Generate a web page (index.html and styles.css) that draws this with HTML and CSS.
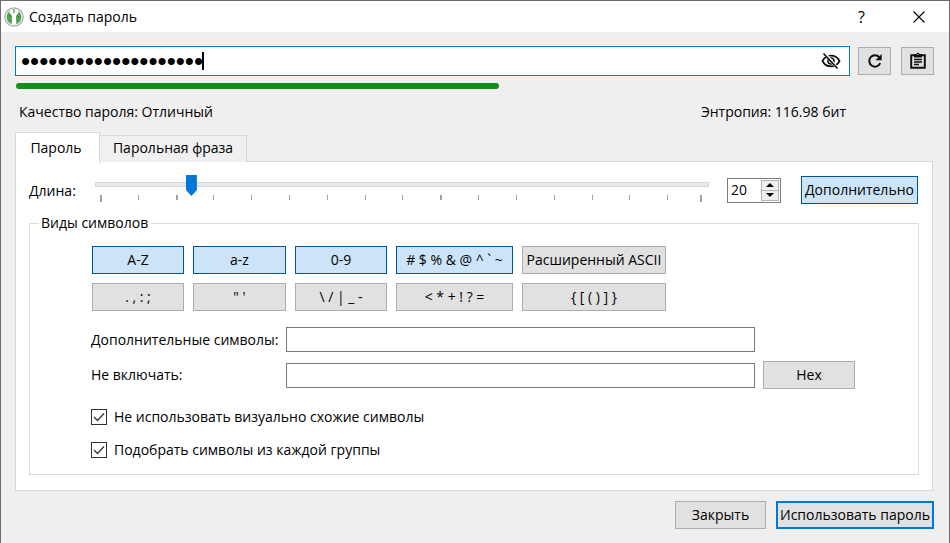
FILE: index.html
```html
<!DOCTYPE html>
<html lang="ru">
<head>
<meta charset="utf-8">
<title>Создать пароль</title>
<link rel="stylesheet" href="styles.css">
</head>
<body>
<div class="window">
  <header class="titlebar">
    <svg class="logo" viewBox="0 0 20 20" aria-hidden="true">
      <circle cx="10" cy="10" r="9.2" fill="#f4f4f4" stroke="#a9a9a9" stroke-width="1.2"/>
      <circle cx="10" cy="10" r="7.4" fill="#4aa556"/>
      <path d="M6 2.600h8l.6 3.200-2.600 3.200.3 8.400-2.300.4-2.300-.4.3-8.400-2.600-3.200z" fill="#fff"/>
      <path d="M9 2h2v4H9z" fill="#9db09e"/>
      <path d="M5 8h1v1H5zM14 9h1v1h-1zM6 13h1v1H6zM13 13h1v1h-1z" fill="#8a4a2a"/>
    </svg>
    <h1 class="title">Создать пароль</h1>
    <button class="caption help" type="button" aria-label="Справка">?</button>
    <button class="caption" type="button" aria-label="Закрыть окно">
      <svg width="12" height="12" viewBox="0 0 12 12"><path d="M.5.5l11 11M11.500.5l-11 11" stroke="#000" stroke-width="1.100" fill="none"/></svg>
    </button>
  </header>

  <main class="content">
    <div class="password-row">
      <div class="password-box">
        <input class="password" type="password" value="abcdefghijklmnopqrst" aria-label="Пароль">
        <span class="caret"></span>
        <button class="eye" type="button" aria-label="Показать пароль">
          <svg width="20" height="18" viewBox="0 0 20 18" fill="none" stroke="#111">
            <path d="M1.500 9C3.300 5.400 6.400 3.600 10 3.600S16.700 5.400 18.500 9c-1.800 3.600-4.900 5.400-8.500 5.400S3.300 12.600 1.500 9z" stroke-width="1.700"/>
            <circle cx="10" cy="9" r="3" stroke-width="1.600"/>
            <path d="M3.500 1l13 15.500" stroke="#fff" stroke-width="3"/>
            <path d="M2.500 1.500l14 15" stroke-width="1.700"/>
          </svg>
        </button>
      </div>
      <button class="btn tool" type="button" aria-label="Создать заново">
        <svg width="16" height="16" viewBox="0 0 16 16"><path d="M13.200 10.200A5.700 5.700 0 1 1 12.300 4.200" fill="none" stroke="#111" stroke-width="2"/><path d="M14.700 1v6.200H8.500z" fill="#111"/></svg>
      </button>
      <button class="btn tool" type="button" aria-label="Копировать пароль">
        <svg width="16" height="18" viewBox="0 0 16 18"><path d="M1.200 3.200h13.600v12.600H1.200z" fill="none" stroke="#111" stroke-width="2"/><path d="M4 2h2.400a1.700 1.700 0 0 1 3.200 0H12v3.500H4z" fill="#111"/><path d="M7.500 2h1v1h-1z" fill="#ddd"/><path d="M4 7.500h8M4 10h8M4 12.500h5" stroke="#111" stroke-width="1.300"/></svg>
      </button>
    </div>

    <div class="meter"><div class="meter-fill" style="width:52.600%"></div></div>

    <div class="quality">
      <span>Качество пароля: Отличный</span>
      <span>Энтропия: 116.98 бит</span>
    </div>

    <div class="tabs" role="tablist">
      <button class="tab active" type="button" role="tab" aria-selected="true">Пароль</button>
      <button class="tab" type="button" role="tab" aria-selected="false">Парольная фраза</button>
    </div>

    <section class="panel">
      <div class="length-row">
        <label class="length-label" for="length">Длина:</label>
        <div class="slider-box">
          <input class="slider" id="length" type="range" min="1" max="128" value="20">
          <div class="ticks">
            <i class="major"></i><i></i><i class="wide"></i><i></i><i></i><i></i><i></i><i></i><i></i><i class="wide"></i><i></i><i></i><i></i><i></i><i></i><i></i><i class="major"></i>
          </div>
        </div>
        <div class="spin">
          <input class="spin-value" type="text" value="20" aria-label="Длина пароля">
          <div class="spin-buttons">
            <button type="button" aria-label="Больше"><svg width="8" height="4" viewBox="0 0 8 4"><path d="M0 4l4-4 4 4z"/></svg></button>
            <button type="button" aria-label="Меньше"><svg width="8" height="4" viewBox="0 0 8 4"><path d="M0 0l4 4 4-4z"/></svg></button>
          </div>
        </div>
        <button class="btn on advanced" type="button">Дополнительно</button>
      </div>

      <fieldset class="group">
        <legend>Виды символов</legend>
        <div class="types">
          <button class="btn on" type="button">A-Z</button>
          <button class="btn on" type="button">a-z</button>
          <button class="btn on" type="button">0-9</button>
          <button class="btn on" type="button"># $ % &amp; @ ^ ` ~</button>
          <button class="btn" type="button">Расширенный ASCII</button>
          <button class="btn" type="button">. , : ;</button>
          <button class="btn" type="button">" '</button>
          <button class="btn" type="button">\ / | _ -</button>
          <button class="btn" type="button">&lt; * + ! ? =</button>
          <button class="btn" type="button">{ [ ( ) ] }</button>
        </div>
        <div class="fields">
          <label for="extra">Дополнительные символы:</label>
          <input class="field" id="extra" type="text">
          <span></span>
          <label for="exclude">Не включать:</label>
          <input class="field" id="exclude" type="text">
          <button class="btn" type="button">Hex</button>
        </div>
        <div class="checks">
          <label><input type="checkbox" checked>Не использовать визуально схожие символы</label>
          <label><input type="checkbox" checked>Подобрать символы из каждой группы</label>
        </div>
      </fieldset>
    </section>

    <footer class="actions">
      <button class="btn close" type="button">Закрыть</button>
      <button class="btn default" type="button">Использовать пароль</button>
    </footer>
  </main>
</div>
</body>
</html>
```
FILE: styles.css
```css
* { box-sizing: border-box; }

body {
  margin: 0;
  background: #efefef;
  color: #000;
  font: 14px/20px "Open Sans", "Noto Sans", sans-serif;
}

button, input { font: inherit; color: inherit; margin: 0; padding: 0; border-radius: 0; }

.window {
  min-height: 100vh;
  border: 1px solid #6c6c6c;
  border-bottom: 0;
}

.titlebar {
  display: flex;
  align-items: center;
  height: 31px;
  padding-left: 3px;
  background: #fff;
}
.logo { width: 20px; height: 20px; }
.title { flex: 1; margin: 0 0 0 5px; font-size: 14px; font-weight: 400; }
.caption {
  display: flex;
  align-items: center;
  justify-content: center;
  width: 57px;
  height: 30px;
  border: 0;
  background: none;
}
.help { font-size: 16px; }
.titlebar .caption:last-child { margin-right: 2px; }

.content { padding: 14px 15px 12px 14px; }

.password-row { display: flex; align-items: center; }
.password-box {
  position: relative;
  display: flex;
  flex: 1;
  height: 30px;
  padding: 0 8px 0 5px;
  align-items: center;
  border: 1px solid #0078d7;
  background: #fff;
}
.password { flex: 1; min-width: 0; height: 28px; border: 0; outline: 0; background: none; font-size: 26px; font-family: "Liberation Sans", sans-serif; }
.caret { position: absolute; left: 186px; top: 5px; width: 2px; height: 18px; background: #000; }
.eye { display: flex; border: 0; background: none; }

.btn {
  height: 28px;
  border: 1px solid #adadad;
  background: #e1e1e1;
  white-space: nowrap;
}
.btn.on { border-color: #005499; background: #cce4f7; }
.btn.default { border: 2px solid #0078d7; }
.tool { display: flex; align-items: center; justify-content: center; width: 33px; margin-left: 8px; }
.tool + .tool { margin-left: 10px; }

.meter { margin: 7px 0 13px 1px; }
.meter-fill { height: 6px; border-radius: 3px; background: #138f1b; }

.quality { display: flex; justify-content: space-between; padding: 0 88px 0 4px; }

.tabs { display: flex; align-items: flex-end; height: 30px; margin-top: 10px; }
.tab {
  height: 27px;
  width: 147px;
  padding-bottom: 2px;
  border: 1px solid #d9d9d9;
  border-width: 1px 1px 0 0;
  background: #f0f0f0;
}
.tab.active {
  position: relative;
  width: 85px;
  height: 31px;
  margin-bottom: -1px;
  padding: 0 3px 0 0;
  border-width: 1px 1px 0;
  background: #fff;
}

.panel {
  margin: -1px 1px 0 0;
  padding: 14px 13px 15px;
  border: 1px solid #d9d9d9;
  background: #fff;
}

.length-row { display: flex; align-items: center; height: 28px; padding-right: 1px; }
.length-label { width: 66px; padding-top: 2px; }
.slider-box { flex: 1; align-self: flex-start; margin-top: -2px; }
.slider {
  display: block;
  width: 100%;
  height: 21px;
  appearance: none;
  background: none;
}
.slider::-webkit-slider-runnable-track {
  height: 5px;
  border: 1px solid #d6d6d6;
  background: #e7eaea;
}
.slider::-webkit-slider-thumb {
  width: 11px;
  height: 21px;
  margin-top: -8px;
  appearance: none;
  background: #0078d7;
  clip-path: polygon(0 0, 100% 0, 100% 72%, 50% 100%, 0 72%);
}
.ticks {
  display: grid;
  grid-template-columns: repeat(15, 38fr) 33fr 2px;
  margin: 0 7px 0 5px;
}
.ticks i { width: 1px; height: 5px; background: #a5a297; }
.ticks .wide { width: 2px; }
.ticks .major { width: 2px; height: 7px; }

.spin {
  display: flex;
  width: 54px;
  height: 25px;
  margin: 0 20px 0 18px;
  padding: 1px;
  border: 1px solid #7a7a7a;
}
.spin-value { flex: 1; min-width: 0; padding-left: 2px; border: 0; background: none; }
.spin-buttons { display: flex; flex-direction: column; width: 18px; }
.spin-buttons button {
  display: flex;
  flex: 1;
  align-items: center;
  justify-content: center;
  border: 1px solid #b4b4b4;
  background: #efefef;
}
.spin-buttons button + button { margin-top: -1px; }
.advanced { width: 117px; }

.group {
  margin: 9px 0 0;
  padding: 13px 0 14px 61px;
  border: 1px solid #dcdcdc;
}
.group legend { margin-left: -52px; padding: 0 3px 0 2px; }

.types {
  display: grid;
  grid-template-columns: 92px 93px 92px 117px 144px;
  gap: 9px;
  padding-left: 1px;
}
.fields {
  display: grid;
  grid-template-columns: 195px 469px 92px;
  align-items: center;
  row-gap: 9px;
  margin-top: 16px;
}
.fields .btn { margin-left: 8px; width: 92px; }
.field { height: 25px; padding: 0 4px; border: 1px solid #7a7a7a; background: #fff; }

.checks { display: flex; flex-direction: column; gap: 13px; margin-top: 18px; }
.checks label { display: flex; align-items: center; gap: 7px; }
.checks input {
  width: 16px;
  height: 16px;
  appearance: none;
  border: 1px solid #333;
  background: #fff url("data:image/svg+xml,%3Csvg xmlns='http://www.w3.org/2000/svg' viewBox='0 0 14 14'%3E%3Cpath d='M2 7l3.500 3.500L12 3.500' fill='none' stroke='%23333' stroke-width='1.300'/%3E%3C/svg%3E");
}

.actions { display: flex; justify-content: flex-end; gap: 10px; margin-top: 10px; }
.close { width: 91px; }
.default { width: 158px; }
```
